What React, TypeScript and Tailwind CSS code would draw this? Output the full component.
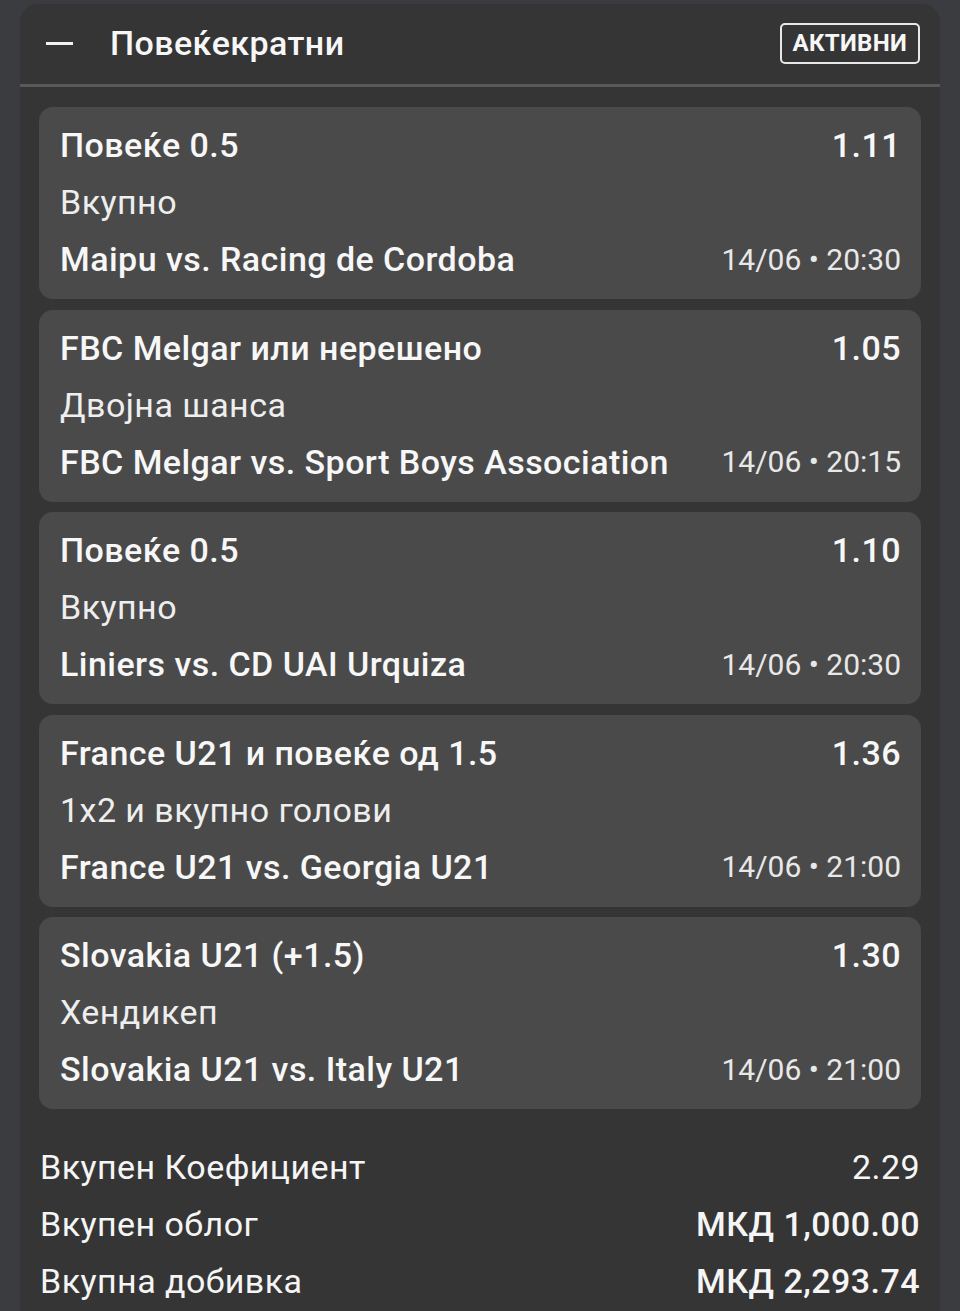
import React from "react";

type Bet = { pick: string; odd: string; market: string; match: string; time: string };

const bets: Bet[] = [
  { pick: "Повеќе 0.5", odd: "1.11", market: "Вкупно", match: "Maipu vs. Racing de Cordoba", time: "14/06 • 20:30" },
  { pick: "FBC Melgar или нерешено", odd: "1.05", market: "Двојна шанса", match: "FBC Melgar vs. Sport Boys Association", time: "14/06 • 20:15" },
  { pick: "Повеќе 0.5", odd: "1.10", market: "Вкупно", match: "Liniers vs. CD UAI Urquiza", time: "14/06 • 20:30" },
  { pick: "France U21 и повеќе од 1.5", odd: "1.36", market: "1x2 и вкупно голови", match: "France U21 vs. Georgia U21", time: "14/06 • 21:00" },
  { pick: "Slovakia U21 (+1.5)", odd: "1.30", market: "Хендикеп", match: "Slovakia U21 vs. Italy U21", time: "14/06 • 21:00" },
];

function Card({ b }: { b: Bet }) {
  return (
    <div className="rounded-[14px] bg-[#4a4a4a] pl-[21px] pr-[20px] pt-[10px] pb-[11px] text-[34px] leading-[57px] tracking-[0.45px]">
      <div className="flex items-baseline justify-between">
        <span className="font-medium text-[#f7f7f7]">{b.pick}</span>
        <span className="font-medium text-[#f7f7f7]">{b.odd}</span>
      </div>
      <div className="text-[#eeeeee]">{b.market}</div>
      <div className="flex items-center justify-between">
        <span className="font-medium text-[#f7f7f7]">{b.match}</span>
        <span className="text-[30px] leading-[50px] tracking-normal text-[#e8e8e8]">{b.time}</span>
      </div>
    </div>
  );
}

export default function App() {
  return (
    <div
      className="h-[1311px] w-[960px] overflow-hidden bg-[#3b3c40] px-[20px] pt-[4px]"
      style={{ fontFamily: "Roboto, 'Noto Sans', sans-serif" }}
    >
      <div className="h-full rounded-t-[18px] bg-[#353535]">
        <div className="flex h-[80px] items-center pb-[2px] pl-[26px] pr-[20px]">
          <div className="h-[3px] w-[27px] bg-[#f2f2f2]" />
          <div className="ml-[37px] flex-1 text-[34px] font-medium tracking-[0.4px] text-[#f7f7f7]">Повеќекратни</div>
          <div className="flex h-[41px] items-center rounded-[5px] border-2 border-[#e8e8e8] px-[11px] text-[24px] font-bold tracking-[0.3px] text-[#f7f7f7]">
            АКТИВНИ
          </div>
        </div>
        <div className="h-[3px] bg-[#595959]" />
        <div className="flex flex-col gap-[10.5px] px-[19px] pt-[20px]">
          {bets.map((b, i) => (
            <Card key={i} b={b} />
          ))}
        </div>
        <div className="mt-[30px] px-[20px] text-[34px] leading-[57px] tracking-[0.45px] text-[#f5f5f5]">
          <div className="flex justify-between">
            <span>Вкупен Коефициент</span>
            <span>2.29</span>
          </div>
          <div className="flex justify-between">
            <span>Вкупен облог</span>
            <span className="font-medium">МКД 1,000.00</span>
          </div>
          <div className="flex justify-between">
            <span>Вкупна добивка</span>
            <span className="font-medium">МКД 2,293.74</span>
          </div>
        </div>
      </div>
    </div>
  );
}
